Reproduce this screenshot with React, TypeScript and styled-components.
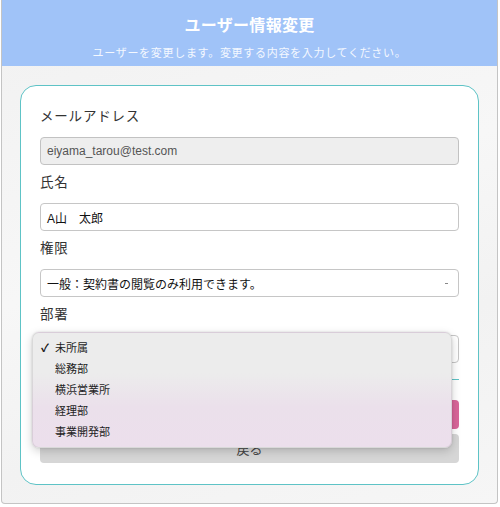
import styled, { createGlobalStyle } from 'styled-components'

const GlobalStyle = createGlobalStyle`
	html, body {
		margin: 0;
		padding: 0;
		background: #ffffff;
	}
	body {
		font-family: 'Liberation Sans', 'Noto Sans CJK JP', sans-serif;
	}
	* {
		box-sizing: border-box;
	}
`

const departments = ['未所属', '総務部', '横浜営業所', '経理部', '事業開発部']

export default function App() {
	return (
		<>
			<GlobalStyle />
			<StyledFrame>
				<StyledHeader>
					<h1>ユーザー情報変更</h1>
					<p>ユーザーを変更します。変更する内容を入力してください。</p>
				</StyledHeader>
				<StyledBody>
					<StyledCard>
						<Field>
							<Label>メールアドレス</Label>
							<Input $disabled>eiyama_tarou@test.com</Input>
						</Field>
						<Field>
							<Label>氏名</Label>
							<Input>A山　太郎</Input>
						</Field>
						<Field>
							<Label>権限</Label>
							<Input>
								一般：契約書の閲覧のみ利用できます。
								<Arrow />
							</Input>
						</Field>
						<Field>
							<Label>部署</Label>
							<SelectWrap>
								<Input>
									未所属
									<Arrow />
								</Input>
								<Menu>
									{departments.map((d, i) => (
										<MenuItem key={d}>
											<Check>{i === 0 ? '✓' : ''}</Check>
											<span>{d}</span>
										</MenuItem>
									))}
								</Menu>
							</SelectWrap>
						</Field>
						<Divider />
						<Button $variant='primary'>変更する</Button>
						<Button $variant='back'>戻る</Button>
					</StyledCard>
				</StyledBody>
			</StyledFrame>
		</>
	)
}

const StyledFrame = styled.div`
	width: 497px;
	height: 504px;
	margin-left: 1px;
	border: 1px solid #c4c4c4;
	border-top: none;
	border-radius: 0 0 4px 4px;
	overflow: hidden;
	background: linear-gradient(160deg, #f1f1f1 0%, #f7f7f7 45%, #f2f2f2 70%, #f6f6f6 100%);
`

const StyledHeader = styled.div`
	height: 66px;
	margin-left: -1px;
	margin-right: -1px;
	background-color: #a0c3f8;
	display: flex;
	flex-direction: column;
	align-items: center;
	padding-top: 15px;
	color: #ffffff;

	h1 {
		margin: 0;
		font-size: 16px;
		line-height: 22px;
		font-weight: 700;
		letter-spacing: 0.3px;
	}

	p {
		margin: 8px 0 0;
		font-size: 11px;
		line-height: 16px;
		letter-spacing: 0.7px;
		color: #f4f8ff;
	}
`

const StyledBody = styled.div`
	padding: 19px 18px 0 18px;
`

const StyledCard = styled.div`
	width: 459px;
	height: 400px;
	background: #ffffff;
	border: 1px solid #5ec3c6;
	border-radius: 16px;
	padding: 21px 19px 0 19px;
	display: flex;
	flex-direction: column;
`

const Field = styled.div`
	display: flex;
	flex-direction: column;
	gap: 10px;
	margin-bottom: 8px;
`

const Label = styled.div`
	font-size: 13.5px;
	line-height: 20px;
	color: #333333;
	letter-spacing: 0.8px;
`

const Input = styled.div<{ $disabled?: boolean }>`
	position: relative;
	height: 28px;
	display: flex;
	align-items: center;
	padding: 0 6px;
	border: 1px solid ${(p) => (p.$disabled ? '#c2c2c2' : '#c6c6c6')};
	border-radius: 4px;
	background: ${(p) => (p.$disabled ? '#eeeeee' : '#ffffff')};
	color: ${(p) => (p.$disabled ? '#555555' : '#111111')};
	font-size: 12px;
`

const Arrow = styled.span`
	position: absolute;
	right: 10px;
	top: 13px;
	width: 3px;
	height: 1px;
	background: #888888;
`

const SelectWrap = styled.div`
	position: relative;
`

const Menu = styled.div`
	position: absolute;
	left: -8px;
	top: -3px;
	width: 420px;
	height: 116px;
	padding-top: 3px;
	border-radius: 7px;
	border: 1px solid rgba(0, 0, 0, 0.08);
	background: linear-gradient(180deg, #ececec 0%, #ececec 35%, #ebe0eb 65%, #ecdfec 100%);
	box-shadow: 0 3px 10px rgba(0, 0, 0, 0.18), 0 0 2px rgba(0, 0, 0, 0.15);
	z-index: 10;
`

const MenuItem = styled.div`
	height: 21px;
	display: flex;
	align-items: center;
	padding-left: 8px;
	font-size: 11px;
	color: #1e1e1e;
`

const Check = styled.span`
	width: 14px;
	flex-shrink: 0;
	font-size: 11px;
	font-weight: 700;
	color: #111111;
`

const Divider = styled.div`
	height: 1px;
	background: #5ec3c6;
	margin-top: 8px;
	margin-bottom: 20px;
`

const Button = styled.div<{ $variant: 'primary' | 'back' }>`
	height: 29px;
	display: flex;
	align-items: center;
	justify-content: center;
	border-radius: 4px;
	font-size: 13px;
	margin-bottom: 5px;
	color: ${(p) => (p.$variant === 'primary' ? '#ffffff' : '#444444')};
	background: ${(p) => (p.$variant === 'primary' ? '#d9669a' : '#d6d6d6')};
`
